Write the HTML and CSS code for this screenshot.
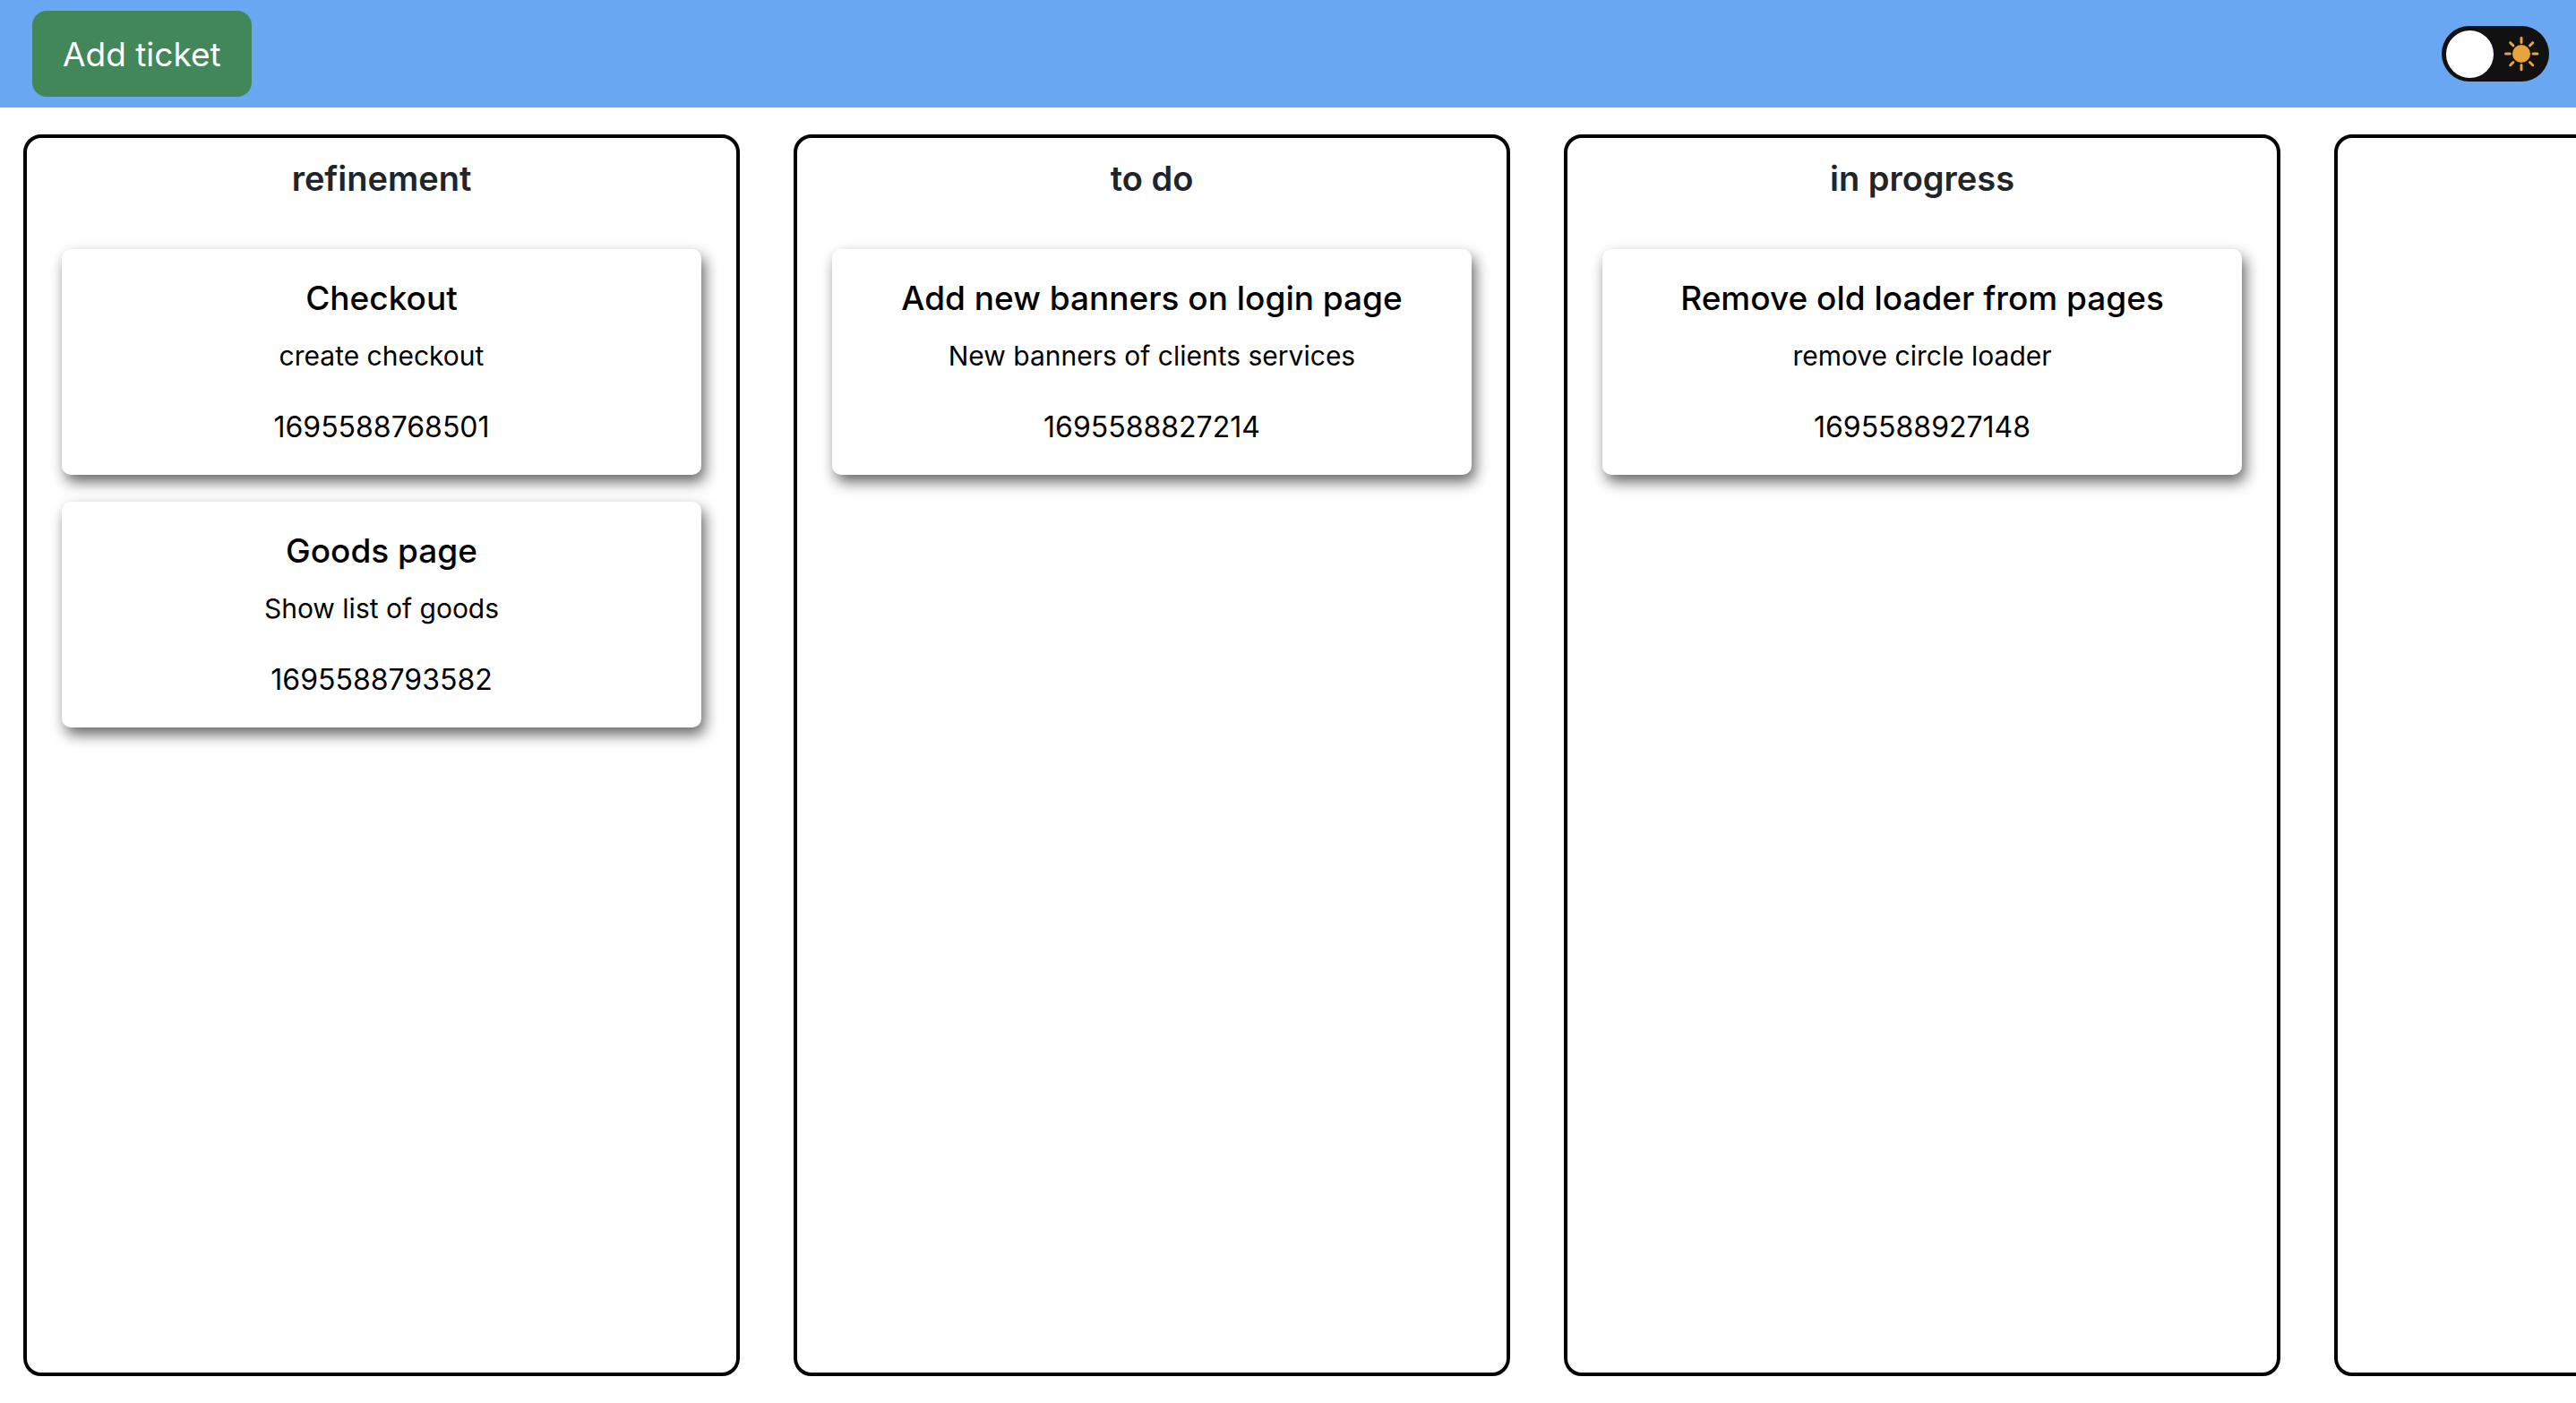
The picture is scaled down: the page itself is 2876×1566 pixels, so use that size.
FILE: index.html
```html
<!DOCTYPE html>
<html lang="en">
<head>
<meta charset="utf-8">
<meta name="viewport" content="width=device-width, initial-scale=1">
<title>Tickets</title>
<link rel="stylesheet" href="styles.css">
</head>
<body>
<header class="topbar">
  <button type="button" class="add-button">Add ticket</button>
  <label class="theme-switch">
    <input type="checkbox" class="theme-input" aria-label="Dark theme">
    <span class="theme-knob"></span>
    <svg class="theme-sun" viewBox="0 0 40 40" aria-hidden="true">
      <circle cx="20" cy="20" r="10"/>
      <path d="M20 2.200V7.400M20 32.600V37.800M2.500 20H7.300M33.100 20H37.900M7.700 7.700L10.900 10.900M29.500 10.900L32.700 7.700M7.700 32.700L10.900 29.500M29.500 29.500L32.700 32.700"/>
    </svg>
  </label>
</header>
<main class="board">
  <section class="column">
    <h2 class="column-title">refinement</h2>
    <article class="card">
      <h3 class="card-title">Checkout</h3>
      <p class="card-text">create checkout</p>
      <p class="card-id">1695588768501</p>
    </article>
    <article class="card">
      <h3 class="card-title">Goods page</h3>
      <p class="card-text">Show list of goods</p>
      <p class="card-id">1695588793582</p>
    </article>
  </section>
  <section class="column">
    <h2 class="column-title">to do</h2>
    <article class="card">
      <h3 class="card-title">Add new banners on login page</h3>
      <p class="card-text">New banners of clients services</p>
      <p class="card-id">1695588827214</p>
    </article>
  </section>
  <section class="column">
    <h2 class="column-title">in progress</h2>
    <article class="card">
      <h3 class="card-title">Remove old loader from pages</h3>
      <p class="card-text">remove circle loader</p>
      <p class="card-id">1695588927148</p>
    </article>
  </section>
  <section class="column"></section>
</main>
</body>
</html>
```
FILE: styles.css
```css
* {
  box-sizing: border-box;
}

body {
  display: flex;
  flex-direction: column;
  min-height: 100vh;
  margin: 0;
  background: #fff;
  color: #000;
  font-family: Inter, "Liberation Sans", sans-serif;
}

.topbar {
  display: flex;
  align-items: center;
  justify-content: space-between;
  padding: 12px 30px 12px 36px;
  background: #6aa7f2;
}

.add-button {
  padding: 17px 34px 15px;
  border: 0;
  border-radius: 16px;
  background: #42875a;
  color: #fff;
  font-family: inherit;
  font-size: 37px;
  line-height: 64px;
}

.theme-switch {
  display: flex;
  align-items: center;
  justify-content: space-between;
  width: 120px;
  height: 62px;
  padding: 0 11px 0 5px;
  border-radius: 31px;
  background: #111;
}

.theme-input {
  position: absolute;
  opacity: 0;
}

.theme-knob {
  width: 53px;
  height: 53px;
  border-radius: 50%;
  background: #fff;
}

.theme-sun {
  width: 40px;
  height: 40px;
  fill: #e8a33d;
  stroke: #e8a33d;
  stroke-width: 3;
  stroke-linecap: round;
}

.theme-sun circle {
  stroke: none;
}

.board {
  display: flex;
  flex: 1;
  gap: 60px;
  padding: 30px 26px;
  overflow-x: auto;
  scrollbar-width: none;
}

.column {
  display: flex;
  flex: 0 0 800px;
  flex-direction: column;
  gap: 30px;
  padding: 0 39px;
  border: 4px solid #000;
  border-radius: 20px;
}

.column-title {
  margin: 21px 0 25px;
  color: #212529;
  font-size: 38px;
  font-weight: 600;
  line-height: 48px;
  text-align: center;
}

.card {
  padding: 31px 20px 29px;
  border-radius: 10px;
  background: #fff;
  box-shadow: 4px 8px 16px rgba(0, 0, 0, 0.6);
  text-align: center;
}

.card-title {
  margin: 0 0 16px;
  font-size: 37px;
  font-weight: 500;
  line-height: 48px;
}

.card-text {
  margin: 0 0 32px;
  font-size: 30px;
  line-height: 48px;
}

.card-id {
  margin: 0;
  font-size: 32px;
  line-height: 48px;
}
```
